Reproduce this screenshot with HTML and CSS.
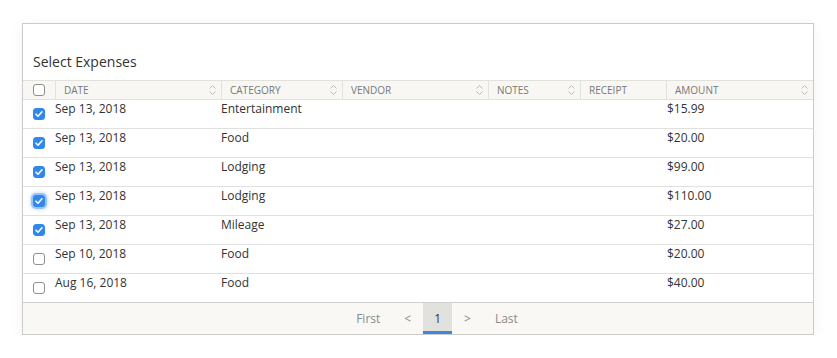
FILE: index.html
```html
<!DOCTYPE html>
<html>
<head>
<meta charset="utf-8">
<link rel="stylesheet" href="styles.css">
</head>
<body>
<div class="panel">
  <div class="title">Select Expenses</div>
  <table class="grid">
    <colgroup>
      <col class="c-check"><col class="c-date"><col class="c-cat"><col class="c-vendor"><col class="c-notes"><col class="c-receipt"><col class="c-amount">
    </colgroup>
    <thead>
      <tr>
        <th class="th-check"><span class="cb"></span></th>
        <th><div class="th-in"><span>Date</span><svg class="sort" width="7" height="12" viewBox="0 0 7 12"><path d="M0.5 4.5 L3.5 1.5 L6.5 4.5 M0.5 7.5 L3.5 10.5 L6.5 7.5"/></svg></div></th>
        <th><div class="th-in"><span>Category</span><svg class="sort" width="7" height="12" viewBox="0 0 7 12"><path d="M0.5 4.5 L3.5 1.5 L6.5 4.5 M0.5 7.5 L3.5 10.5 L6.5 7.5"/></svg></div></th>
        <th><div class="th-in"><span>Vendor</span><svg class="sort" width="7" height="12" viewBox="0 0 7 12"><path d="M0.5 4.5 L3.5 1.5 L6.5 4.5 M0.5 7.5 L3.5 10.5 L6.5 7.5"/></svg></div></th>
        <th><div class="th-in"><span>Notes</span><svg class="sort" width="7" height="12" viewBox="0 0 7 12"><path d="M0.5 4.5 L3.5 1.5 L6.5 4.5 M0.5 7.5 L3.5 10.5 L6.5 7.5"/></svg></div></th>
        <th><div class="th-in"><span>Receipt</span></div></th>
        <th><div class="th-in"><span>Amount</span><svg class="sort" width="7" height="12" viewBox="0 0 7 12"><path d="M0.5 4.5 L3.5 1.5 L6.5 4.5 M0.5 7.5 L3.5 10.5 L6.5 7.5"/></svg></div></th>
      </tr>
    </thead>
    <tbody>
      <tr><td class="td-check"><span class="cb on"></span></td><td>Sep 13, 2018</td><td>Entertainment</td><td></td><td></td><td></td><td class="amt">$15.99</td></tr>
      <tr><td class="td-check"><span class="cb on"></span></td><td>Sep 13, 2018</td><td>Food</td><td></td><td></td><td></td><td class="amt">$20.00</td></tr>
      <tr><td class="td-check"><span class="cb on"></span></td><td>Sep 13, 2018</td><td>Lodging</td><td></td><td></td><td></td><td class="amt">$99.00</td></tr>
      <tr><td class="td-check"><span class="cb on focus"></span></td><td>Sep 13, 2018</td><td>Lodging</td><td></td><td></td><td></td><td class="amt">$110.00</td></tr>
      <tr><td class="td-check"><span class="cb on"></span></td><td>Sep 13, 2018</td><td>Mileage</td><td></td><td></td><td></td><td class="amt">$27.00</td></tr>
      <tr><td class="td-check"><span class="cb"></span></td><td>Sep 10, 2018</td><td>Food</td><td></td><td></td><td></td><td class="amt">$20.00</td></tr>
      <tr class="last"><td class="td-check"><span class="cb"></span></td><td>Aug 16, 2018</td><td>Food</td><td></td><td></td><td></td><td class="amt">$40.00</td></tr>
    </tbody>
  </table>
  <div class="footer">
    <span class="pg">First</span>
    <span class="pg">&lt;</span>
    <span class="pg current">1</span>
    <span class="pg">&gt;</span>
    <span class="pg">Last</span>
  </div>
</div>
</body>
</html>
```

FILE: styles.css
```css
html, body {
  margin: 0;
  padding: 0;
  background: #ffffff;
}
body {
  padding: 23px 0 0 22px;
  font-family: "Open Sans", "Liberation Sans", sans-serif;
  color: #333;
}
.panel {
  box-sizing: border-box;
  width: 792px;
  border: 1px solid #cbcbcb;
  background: #fff;
  box-shadow: 0 2px 14px rgba(0,0,0,0.05);
}
.title {
  height: 56px;
  box-sizing: border-box;
  padding: 28px 10px 0 10px;
  font-size: 14px;
  line-height: 20px;
  color: #333;
}
.grid {
  width: 790px;
  table-layout: fixed;
  border-collapse: separate;
  border-spacing: 0;
}
.c-check { width: 32px; }
.c-date { width: 166px; }
.c-cat { width: 121px; }
.c-vendor { width: 146px; }
.c-notes { width: 92px; }
.c-receipt { width: 86px; }
.c-amount { width: 147px; }

thead th {
  background: #f8f7f4;
  border-top: 1px solid #e3e1dc;
  border-bottom: 1px solid #e3e1dc;
  border-left: 1px solid #e3e1dc;
  height: 20px;
  box-sizing: border-box;
  padding: 0;
  font-weight: normal;
  font-size: 10px;
  line-height: 18px;
  text-align: left;
  vertical-align: middle;
}
thead th.th-check {
  border-left: none;
  padding: 3px 0 0 10px;
  vertical-align: top;
  font-size: 0;
  line-height: 0;
}
.th-in {
  display: flex;
  align-items: center;
  justify-content: space-between;
  height: 18px;
  padding: 0 5px 0 8px;
  font-size: 10px;
  line-height: 18px;
  text-transform: uppercase;
  color: #777;
}
.sort { display: block; }
.sort path {
  fill: none;
  stroke: #b9b9b9;
  stroke-width: 1;
}
tbody td {
  height: 29px;
  padding: 0;
  box-sizing: border-box;
  border-bottom: 1px solid #e0e0e0;
  font-size: 12px;
  line-height: 17px;
  vertical-align: top;
  color: #333;
  white-space: nowrap;
}
tbody tr.last td { border-bottom: none; height: 28px; }
tbody td.td-check {
  padding: 8px 0 0 10px;
  font-size: 0;
  line-height: 0;
}
tbody td.amt { padding-left: 1px; }

.cb {
  display: inline-block;
  box-sizing: border-box;
  width: 12px;
  height: 12px;
  border: 1px solid #8f8f8f;
  border-radius: 3px;
  background: #fff;
  vertical-align: top;
}
.cb.on {
  border-color: #2f88ee;
  background: #2f88ee url("data:image/svg+xml,%3Csvg xmlns='http://www.w3.org/2000/svg' width='12' height='12' viewBox='0 0 12 12'%3E%3Cpath d='M3 6.2 L5 8.2 L9 3.8' fill='none' stroke='white' stroke-width='1.6' stroke-linecap='round' stroke-linejoin='round'/%3E%3C/svg%3E") no-repeat -1px -1px;
}
.cb.focus {
  box-shadow: 0 0 0 2px rgba(80,150,240,0.45), 0 0 3px 3px rgba(80,150,240,0.25);
}

.footer {
  height: 31px;
  border-top: 1px solid #cfcfcf;
  background: #f9f8f5;
  display: flex;
  justify-content: center;
  align-items: stretch;
  padding-left: 38px;
}
.pg {
  display: flex;
  align-items: center;
  padding: 0 12px;
  font-size: 12px;
  color: #8a8a8a;
}
.pg.current {
  padding: 0 11px;
  background: #e1e1dd;
  color: #333;
  box-shadow: inset 0 -3px 0 #3d89d8;
}
```
